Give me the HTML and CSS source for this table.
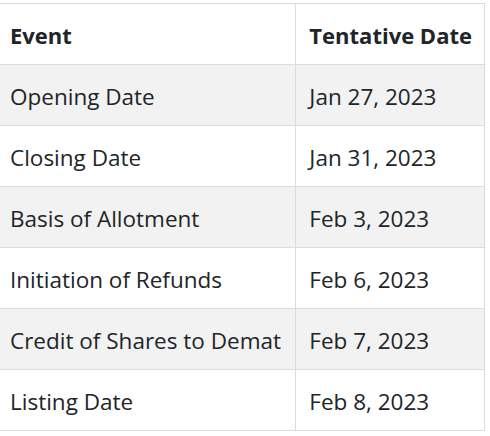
FILE: index.html
```html
<!DOCTYPE html>
<html>
<head>
<meta charset="utf-8">
<link rel="stylesheet" href="styles.css">
</head>
<body>
<table class="ipo-table">
  <thead>
    <tr><th class="col-event">Event</th><th class="col-date">Tentative Date</th></tr>
  </thead>
  <tbody>
    <tr class="striped"><td class="col-event">Opening Date</td><td class="col-date">Jan 27, 2023</td></tr>
    <tr><td class="col-event">Closing Date</td><td class="col-date">Jan 31, 2023</td></tr>
    <tr class="striped"><td class="col-event">Basis of Allotment</td><td class="col-date">Feb 3, 2023</td></tr>
    <tr><td class="col-event">Initiation of Refunds</td><td class="col-date">Feb 6, 2023</td></tr>
    <tr class="striped"><td class="col-event">Credit of Shares to Demat</td><td class="col-date">Feb 7, 2023</td></tr>
    <tr><td class="col-event">Listing Date</td><td class="col-date">Feb 8, 2023</td></tr>
  </tbody>
</table>
</body>
</html>
```
FILE: styles.css
```css
html, body {
  margin: 0;
  padding: 0;
  background: #ffffff;
}
body {
  padding-top: 3px;
  font-family: "Open Sans", "Noto Sans", sans-serif;
  color: #212529;
}
.ipo-table {
  border-collapse: collapse;
  width: 485px;
  font-size: 22.5px;
}
.ipo-table th,
.ipo-table td {
  height: 61px;
  padding: 2px 12px 0 13px;
  border-top: 1px solid #dcdcdc;
  border-bottom: 1px solid #dcdcdc;
  text-align: left;
  box-sizing: border-box;
  vertical-align: middle;
  white-space: nowrap;
}
.ipo-table th {
  font-weight: 700;
  font-size: 22px;
}
.ipo-table td {
  font-weight: 400;
}
.col-event {
  width: 298px;
  padding-left: 10px !important;
  border-right: 1px solid #dcdcdc;
}
.col-date {
  border-right: 1px solid #dcdcdc;
}
.striped {
  background: #f2f2f2;
}
```
